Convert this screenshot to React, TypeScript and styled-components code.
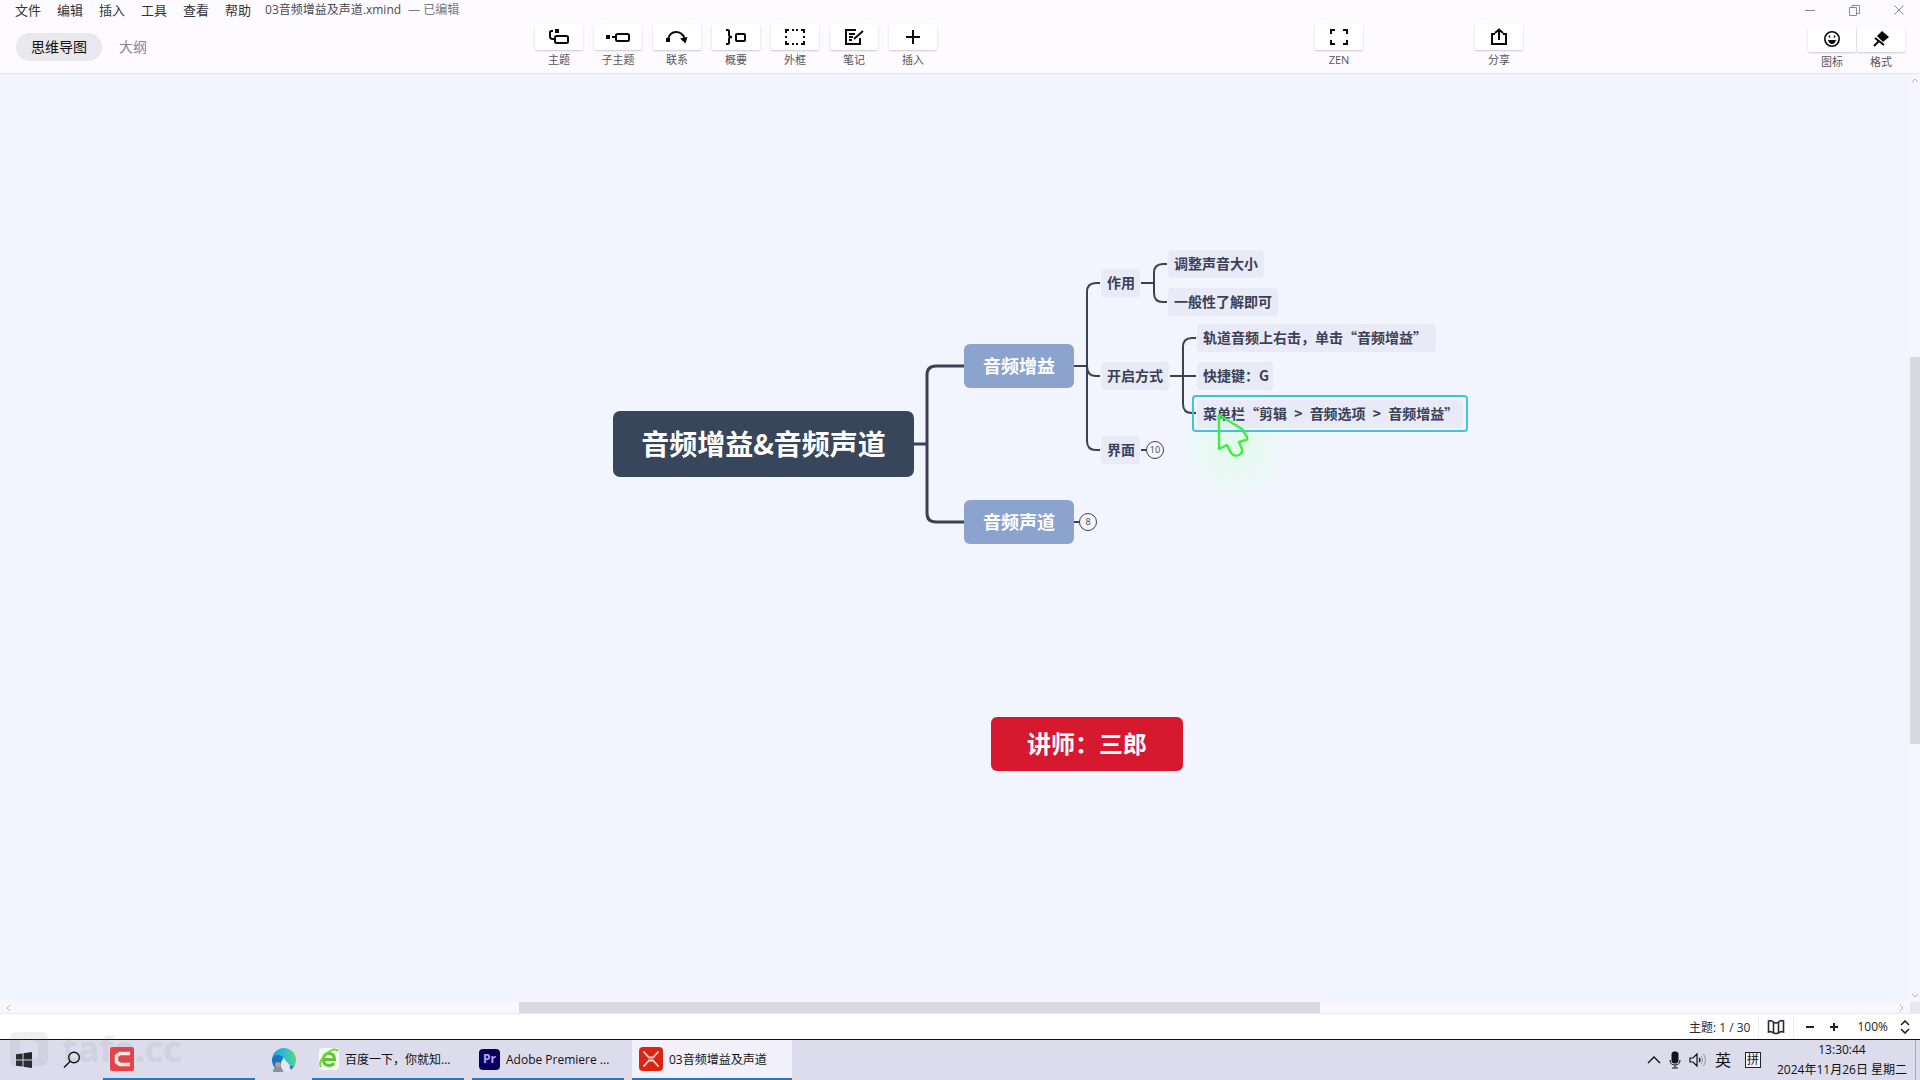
import React from "react";
import styled, { createGlobalStyle, css } from "styled-components";

const uiFont = `"Open Sans", "Noto Sans CJK SC", sans-serif`;
const mapFont = `"Noto Sans CJK SC", "Noto Sans", sans-serif`;
const ink = "#3b4055";

const GlobalStyle = createGlobalStyle`
  *, *::before, *::after { box-sizing: border-box; }
  body { margin: 0; font-family: ${uiFont}; font-size: 12px; color: #222; }
  button { margin: 0; padding: 0; border: 0; background: none; font: inherit; color: inherit; }
  svg { display: block; flex: none; }
`;

const Screen = styled.div`
  position: relative;
  display: flex;
  flex-direction: column;
  height: 100vh;
  overflow: hidden;
  background: #fdfbff;
`;

/* ---------- header ---------- */

const Header = styled.header`
  flex: none;
  display: flex;
  flex-direction: column;
  background: #fdfbff;
  border-bottom: 1px solid #e3e1ec;
`;

const MenuRow = styled.div`
  display: flex;
  align-items: center;
  height: 20px;
  padding: 0 16px 0 15px;
`;

const Menu = styled.nav`
  display: flex;
  gap: 16px;
`;

const MenuButton = styled.button`
  font-size: 13px;
  line-height: 20px;
  color: #333338;
`;

const FileTitle = styled.h1`
  margin: 0 0 0 14px;
  font-size: 12px;
  font-weight: 400;
  line-height: 20px;
  color: #4a4a52;
`;

const EditedMark = styled.span`
  margin-left: 7px;
  color: #77777f;
`;

const WindowControls = styled.div`
  display: flex;
  align-items: center;
  gap: 34px;
  margin-left: auto;
  color: #8a8890;
`;

const ToolRow = styled.div`
  display: flex;
  align-items: flex-start;
  height: 53px;
  padding: 4px 15px 0 16px;
`;

const Tabs = styled.div`
  display: flex;
  gap: 2px;
  margin-top: 9px;
`;

const Tab = styled.button<{ $active?: boolean }>`
  height: 28px;
  padding: 0 15px;
  border-radius: 14px;
  font-size: 14px;
  line-height: 28px;
  color: ${(p) => (p.$active ? "#111" : "#8a8890")};
  background: ${(p) => (p.$active ? "#e9e8ec" : "transparent")};
`;

const Spacer = styled.div<{ $grow: number }>`
  flex: ${(p) => p.$grow} 1 0;
`;

const ToolGroup = styled.div<{ $gap?: number }>`
  display: flex;
  gap: ${(p) => p.$gap ?? 0}px;
`;

const PanelToggles = styled(ToolGroup)`
  padding-top: 2px;
`;

const ToolButton = styled.button`
  display: flex;
  flex-direction: column;
  align-items: center;
  min-width: 48px;
  color: #55555c;
  font-size: 11px;
  line-height: 20px;
`;

const ToolFace = styled.span`
  display: flex;
  align-items: center;
  justify-content: center;
  align-self: stretch;
  height: 26px;
  color: #0a0a0a;
  background: #fff;
  border-radius: 2px;
  box-shadow: 0 1px 2px rgba(60, 50, 80, 0.26);
`;

/* ---------- canvas ---------- */

const Workspace = styled.main`
  flex: 1;
  min-height: 0;
  display: grid;
  grid-template-columns: 1fr 10px;
  grid-template-rows: 1fr 11px;
  background: #f2f5fe;
`;

const Canvas = styled.section`
  position: relative;
  overflow: hidden;
  font-family: ${mapFont};
`;

const Wires = styled.svg`
  position: absolute;
  left: 0;
  top: 0;
  overflow: visible;
`;

const tones = {
  root: css`
    background: #38465b;
    color: #fff;
    font-size: 28px;
    border-radius: 7px;
  `,
  branch: css`
    background: #8ba3cd;
    color: #fff;
    font-size: 18px;
    border-radius: 6px;
  `,
  floating: css`
    background: #d71930;
    color: #fff;
    font-size: 24px;
    border-radius: 6px;
  `,
  leaf: css`
    background: #e8ebf7;
    color: ${ink};
    font-size: 14px;
    border-radius: 4px;
    justify-content: flex-start;
    padding-left: 6px;
  `,
};

const Topic = styled.div<{ $tone: keyof typeof tones; $x: number; $y: number; $w: number; $h: number }>`
  position: absolute;
  left: ${(p) => p.$x}px;
  top: ${(p) => p.$y}px;
  width: ${(p) => p.$w}px;
  height: ${(p) => p.$h}px;
  display: flex;
  align-items: center;
  justify-content: center;
  padding-bottom: 2px;
  font-weight: 700;
  line-height: 1;
  white-space: nowrap;
  ${(p) => tones[p.$tone]}
`;

const Crumb = styled.span`
  padding: 0 4px;
`;

const Selection = styled.div<{ $x: number; $y: number; $w: number; $h: number }>`
  position: absolute;
  left: ${(p) => p.$x}px;
  top: ${(p) => p.$y}px;
  width: ${(p) => p.$w}px;
  height: ${(p) => p.$h}px;
  border: 2px solid #44bfe8;
  border-radius: 4px;
`;

const FoldBadge = styled.button<{ $x: number; $y: number }>`
  position: absolute;
  left: ${(p) => p.$x}px;
  top: ${(p) => p.$y}px;
  width: 18px;
  height: 18px;
  border: 1px solid ${ink};
  border-radius: 50%;
  background: #f5f6fe;
  color: ${ink};
  font-family: ${uiFont};
  font-size: 9px;
  line-height: 16px;
  text-align: center;
`;

const Glow = styled.div`
  position: absolute;
  left: 1176px;
  top: 312px;
  width: 120px;
  height: 120px;
  border-radius: 50%;
  background: radial-gradient(circle, rgba(210, 255, 215, 0.5), rgba(228, 255, 235, 0.35) 45%, rgba(242, 245, 254, 0) 70%);
`;

const Pointer = styled.svg`
  position: absolute;
  left: 1214px;
  top: 337px;
`;

const VScroll = styled.div`
  display: flex;
  flex-direction: column;
  align-items: center;
  padding: 2px 0;
  background: #f6f4fc;
  color: #b5b3bd;
`;

const VThumb = styled.div`
  width: 100%;
  flex: 386 1 0;
  background: #dad9df;
`;

const HScroll = styled.div`
  display: flex;
  align-items: center;
  padding: 0 4px;
  background: #f8f7fe;
  color: #b5b3bd;
`;

const HThumb = styled.div`
  align-self: stretch;
  flex: 801 1 0;
  background: #dbd9df;
`;

const Corner = styled.div`
  background: #e9e7ee;
`;

/* ---------- status bar ---------- */

const StatusBar = styled.footer`
  flex: none;
  display: flex;
  align-items: center;
  justify-content: flex-end;
  height: 27px;
  padding: 0 10px 0 0;
  background: #fff;
  border-top: 1px solid #eae8f0;
  border-bottom: 1px solid #111;
  font-size: 12px;
  color: #2b2b30;
`;

const StatusCell = styled.div`
  display: flex;
  align-items: center;
  height: 24px;
  padding: 0 8px;
  border-right: 1px solid #f0eef3;
`;

const ZoomControls = styled.div`
  display: flex;
  align-items: center;
  gap: 12px;
  padding-left: 10px;
  color: #222;
`;

const ZoomLevel = styled.button`
  display: flex;
  align-items: center;
  gap: 12px;
  margin-left: 5px;
`;

/* ---------- taskbar ---------- */

const Taskbar = styled.footer`
  flex: none;
  display: flex;
  height: 40px;
  padding-right: 4px;
  background: #dcdcec;
  color: #111;
`;

const IconSlot = styled.button<{ $w: number }>`
  display: flex;
  align-items: center;
  justify-content: center;
  width: ${(p) => p.$w}px;
  height: 40px;
`;

const TaskGap = styled.div`
  width: 7px;
`;

const TaskButton = styled.button<{ $w: number; $active?: boolean }>`
  display: flex;
  align-items: center;
  gap: 6px;
  width: ${(p) => p.$w}px;
  height: 40px;
  margin-right: ${(p) => (p.$active ? 0 : 8)}px;
  padding: 0 6px 0 7px;
  border-bottom: 2px solid #1c7cc9;
  background: ${(p) => (p.$active ? "#f2f0fb" : "transparent")};
  font-size: 12px;
  white-space: nowrap;
`;

const Tray = styled.div`
  display: flex;
  align-items: center;
  gap: 8px;
  margin-left: auto;
`;

const InputLanguage = styled.button`
  font-size: 16px;
  line-height: 20px;
`;

const InputMethod = styled.button`
  width: 16px;
  height: 16px;
  margin: 0 8px 0 6px;
  border: 1px solid #222;
  background: #f4f3fb;
  font-size: 12px;
  line-height: 14px;
`;

const Clock = styled.time`
  display: flex;
  flex-direction: column;
  align-items: center;
  padding-right: 8px;
  border-right: 1px solid #aaaabc;
  height: 40px;
  font-size: 12px;
  line-height: 20px;
  white-space: nowrap;
`;

const Watermark = styled.div`
  position: absolute;
  left: 10px;
  bottom: 12px;
  display: flex;
  align-items: center;
  gap: 14px;
  color: #777;
  opacity: 0.1;
  font-size: 36px;
  font-weight: 700;
  line-height: 38px;
  pointer-events: none;
`;

/* ---------- icons ---------- */

const Icon = ({ w = 22, h = 18, children, sw = 2 }: { w?: number; h?: number; sw?: number; children: React.ReactNode }) => (
  <svg width={w} height={h} viewBox={`0 0 ${w} ${h}`} fill="none" stroke="currentColor" strokeWidth={sw} aria-hidden="true">
    {children}
  </svg>
);

const TopicIcon = () => (
  <Icon>
    <path d="M5 3H3.500Q2 3 2 4.500V8.500Q2 11 5 11H6" />
    <rect x="7" y="8" width="13" height="7" rx="1.500" />
    <rect x="7" y="1" width="4" height="4" fill="currentColor" stroke="none" />
  </Icon>
);
const SubtopicIcon = () => (
  <Icon w={24}>
    <rect x="0" y="7" width="4" height="4" fill="currentColor" stroke="none" />
    <path d="M6 9H10" />
    <rect x="10" y="6" width="13" height="7" rx="1.500" />
  </Icon>
);
const RelationIcon = () => (
  <Icon>
    <rect x="0" y="10" width="4" height="4" fill="currentColor" stroke="none" />
    <path d="M2 11Q4 4 10 4Q16 4 18.500 10" />
    <path d="M14 10.500L21.500 9L19.500 15.500Z" fill="currentColor" stroke="none" />
  </Icon>
);
const SummaryIcon = () => (
  <Icon>
    <path d="M1 2H2.500Q4 2 4 3.500V7Q4 9 7 9Q4 9 4 11V14.500Q4 16 2.500 16H1" />
    <rect x="11" y="6" width="9" height="7" rx="1" />
  </Icon>
);
const BoundaryIcon = () => (
  <Icon>
    <path d="M2 5V2H5M8 2H10M12 2H14M17 2H20V5M20 8V10M20 13V16H17M14 16H12M10 16H8M5 16H2V13M2 10V8" />
  </Icon>
);
const NoteIcon = () => (
  <Icon>
    <path d="M13 2H3V16H17V10M6 6H12M6 9H10M6 12H9M11 11L20 3" />
  </Icon>
);
const PlusIcon = () => (
  <Icon>
    <path d="M11 2V16M4 9H18" />
  </Icon>
);
const ZenIcon = () => (
  <Icon>
    <path d="M3 6V2H7M15 2H19V6M19 12V16H15M7 16H3V12" />
  </Icon>
);
const ShareIcon = () => (
  <Icon>
    <path d="M7 6H4V16H18V6H15M11 12V2M7 5L11 1.500L15 5" />
  </Icon>
);
const SmileIcon = () => (
  <Icon>
    <circle cx="11" cy="9" r="7.200" strokeWidth="1.600" />
    <path d="M7 10H15Q14 14 11 14Q8 14 7 10Z" fill="currentColor" stroke="none" />
    <path d="M8.500 5.500V7.500M13.500 5.500V7.500" strokeWidth="1.600" />
  </Icon>
);
const BrushIcon = () => (
  <Icon>
    <path d="M12 1L19 7L13 12L7 6Z" fill="currentColor" stroke="none" />
    <path d="M5 8L14 15M9 11L4 16" />
  </Icon>
);

const StartIcon = () => (
  <svg width="16" height="16" viewBox="0 0 16 16" fill="#25252b" aria-hidden="true">
    <path d="M0 2.300L6.500 1.400V7.500H0ZM7.500 1.300L16 0V7.500H7.500ZM0 8.500H6.500V14.600L0 13.700ZM7.500 8.500H16V16L7.500 14.800Z" />
  </svg>
);
const SearchIcon = () => (
  <Icon w={18} h={18} sw={1.4}>
    <circle cx="11" cy="6.500" r="5.300" />
    <path d="M7.300 10.300L1 16.500" />
  </Icon>
);
const RecorderIcon = () => (
  <svg width="24" height="24" viewBox="0 0 24 24" aria-hidden="true">
    <rect width="24" height="24" rx="2" fill="#e8414a" />
    <path d="M20 6.500H10L6.500 9V15L10 17.500H20" fill="none" stroke="#fff0e6" strokeWidth="3.500" />
  </svg>
);
const EdgeIcon = () => (
  <svg width="24" height="24" viewBox="0 0 24 24" aria-hidden="true">
    <defs>
      <linearGradient id="edge" x1="0" y1="0.300" x2="1" y2="0.200">
        <stop offset="0" stopColor="#1f9fe0" />
        <stop offset="0.600" stopColor="#35c1c9" />
        <stop offset="1" stopColor="#5fd96b" />
      </linearGradient>
    </defs>
    <circle cx="12" cy="12" r="12" fill="url(#edge)" />
    <path d="M1 9Q6 5 11 9Q9 12 11 15Q15 19 22 18Q18 24 12 24Q1 23 0 12Z" fill="#1b74bf" />
    <path d="M9 14L12 10L14 13L17 16L19 23Q14 25 9 23Z" fill="#e3e8f2" />
    <circle cx="6" cy="17" r="3" fill="#b79c95" />
    <path d="M1 24Q1 19 6 19Q11 19 11 24Z" fill="#8f8f9c" />
  </svg>
);
const BrowserIcon = () => (
  <svg width="20" height="22" viewBox="0 0 20 22" aria-hidden="true">
    <rect width="20" height="22" rx="4" fill="#f4fbf0" />
    <path d="M4 11.500H15.500Q15.500 5.500 10 5.500Q4.500 5.500 4.500 11.500Q4.500 17.500 10 17.500Q13.500 17.500 15 15" fill="none" stroke="#5cc534" strokeWidth="3" />
    <path d="M2 19Q-1 14 7 6Q15 -1 19 3" fill="none" stroke="#7ad23f" strokeWidth="2" />
  </svg>
);
const PremiereBadge = styled.span`
  width: 21px;
  height: 21px;
  border-radius: 4px;
  background: #07005c;
  color: #b9a6ff;
  font-size: 12px;
  font-weight: 700;
  line-height: 20px;
  text-align: center;
`;
const XmindIcon = () => (
  <svg width="24" height="24" viewBox="0 0 24 24" aria-hidden="true">
    <rect width="24" height="24" rx="4" fill="#dd2414" />
    <path d="M4.500 4.500L10 10.500H14L19.500 4.500M4.500 19.500L10 13.500H14L19.500 19.500" fill="none" stroke="#ffd9cf" strokeWidth="1.800" />
  </svg>
);

/* ---------- data ---------- */

const menus = ["文件", "编辑", "插入", "工具", "查看", "帮助"];

const tools = [
  { label: "主题", icon: <TopicIcon /> },
  { label: "子主题", icon: <SubtopicIcon /> },
  { label: "联系", icon: <RelationIcon /> },
  { label: "概要", icon: <SummaryIcon /> },
  { label: "外框", icon: <BoundaryIcon /> },
  { label: "笔记", icon: <NoteIcon /> },
  { label: "插入", icon: <PlusIcon /> },
];

const leaves = [
  { text: "作用", x: 1101, y: 195, w: 39, h: 28 },
  { text: "开启方式", x: 1101, y: 288, w: 68, h: 28 },
  { text: "界面", x: 1101, y: 362, w: 39, h: 28 },
  { text: "调整声音大小", x: 1168, y: 176, w: 96, h: 28 },
  { text: "一般性了解即可", x: 1168, y: 214, w: 110, h: 28 },
  { text: "轨道音频上右击，单击“音频增益”", x: 1197, y: 250, w: 239, h: 28 },
  { text: "快捷键：G", x: 1197, y: 288, w: 76, h: 28 },
];

const Tool = ({ label, icon }: { label: string; icon: React.ReactNode }) => (
  <ToolButton type="button">
    <ToolFace>{icon}</ToolFace>
    {label}
  </ToolButton>
);

export default function App() {
  return (
    <Screen>
      <GlobalStyle />
      <Header>
        <MenuRow>
          <Menu>
            {menus.map((m) => (
              <MenuButton type="button" key={m}>{m}</MenuButton>
            ))}
          </Menu>
          <FileTitle>
            03音频增益及声道.xmind<EditedMark>— 已编辑</EditedMark>
          </FileTitle>
          <WindowControls>
            <button type="button" aria-label="最小化"><Icon w={10} h={12} sw={1}><path d="M0 6.500H10" /></Icon></button>
            <button type="button" aria-label="还原"><Icon w={11} h={12} sw={1}><path d="M0.500 3.500H7.500V11.500H0.500ZM3 3.500V1.500H10.500V9.500H7.500" /></Icon></button>
            <button type="button" aria-label="关闭"><Icon w={10} h={12} sw={1}><path d="M0.500 1.500L9.500 10.500M9.500 1.500L0.500 10.500" /></Icon></button>
          </WindowControls>
        </MenuRow>
        <ToolRow>
          <Tabs>
            <Tab type="button" $active>思维导图</Tab>
            <Tab type="button">大纲</Tab>
          </Tabs>
          <Spacer $grow={373} />
          <ToolGroup $gap={11}>
            {tools.map((t) => (
              <Tool key={t.label} {...t} />
            ))}
          </ToolGroup>
          <Spacer $grow={378} />
          <Tool label="ZEN" icon={<ZenIcon />} />
          <Spacer $grow={112} />
          <Tool label="分享" icon={<ShareIcon />} />
          <Spacer $grow={285} />
          <PanelToggles $gap={1}>
            <Tool label="图标" icon={<SmileIcon />} />
            <Tool label="格式" icon={<BrushIcon />} />
          </PanelToggles>
        </ToolRow>
      </Header>

      <Workspace>
        <Canvas>
          <Glow />
          <Topic $tone="root" $x={613} $y={337} $w={301} $h={66}>音频增益&amp;音频声道</Topic>
          <Topic $tone="branch" $x={964} $y={270} $w={110} $h={44}>音频增益</Topic>
          <Topic $tone="branch" $x={964} $y={426} $w={110} $h={44}>音频声道</Topic>
          <Topic $tone="floating" $x={991} $y={643} $w={192} $h={54}>讲师：三郎</Topic>
          {leaves.map((l) => (
            <Topic key={l.text} $tone="leaf" $x={l.x} $y={l.y} $w={l.w} $h={l.h}>{l.text}</Topic>
          ))}
          <Topic $tone="leaf" $x={1197} $y={326} $w={266} $h={28}>
            菜单栏“剪辑<Crumb>&nbsp;&gt;&nbsp;</Crumb>音频选项<Crumb>&nbsp;&gt;&nbsp;</Crumb>音频增益”
          </Topic>
          <Wires width="1" height="1" fill="none" stroke={ink} strokeWidth="2" aria-hidden="true">
            <g strokeWidth="3">
              <path d="M914 370H927M964 292H936Q927 292 927 301V439Q927 448 936 448H964" />
            </g>
            <path d="M1074 292H1087M1100 209H1096Q1087 209 1087 218V367Q1087 376 1096 376H1100M1087 292Q1087 302 1096 302H1100" />
            <path d="M1141 209H1154M1167 190H1163Q1154 190 1154 199V219Q1154 228 1163 228H1167" />
            <path d="M1170 302H1196M1196 264H1192Q1183 264 1183 273V330Q1183 339 1192 339H1196" />
            <path d="M1141 376H1147M1074 448H1080" />
          </Wires>
          <FoldBadge type="button" $x={1146} $y={367}>10</FoldBadge>
          <FoldBadge type="button" $x={1079} $y={439}>8</FoldBadge>
          <Selection $x={1192} $y={321} $w={276} $h={37} />
          <Pointer width="36" height="48" viewBox="0 0 36 48" fill="none" stroke="#3df03a" strokeWidth="2.400" strokeLinejoin="round" aria-hidden="true">
            <path d="M5 4L5 38L13 34L17 42Q20 46 25 44Q29 42 28 38L25 31L32 29Q34 28 33 26L28 18Z" />
          </Pointer>
        </Canvas>
        <VScroll>
          <Icon w={8} h={8} sw={1}><path d="M1 6L4 3L7 6" /></Icon>
          <Spacer $grow={273} />
          <VThumb />
          <Spacer $grow={248} />
          <Icon w={8} h={8} sw={1}><path d="M1 2L4 5L7 2" /></Icon>
        </VScroll>
        <HScroll>
          <Icon w={8} h={8} sw={1}><path d="M6 1L3 4L6 7" /></Icon>
          <Spacer $grow={507} />
          <HThumb />
          <Spacer $grow={578} />
          <Icon w={8} h={8} sw={1}><path d="M2 1L5 4L2 7" /></Icon>
        </HScroll>
        <Corner />
      </Workspace>

      <StatusBar>
        <StatusCell>主题: 1 / 30</StatusCell>
        <StatusCell>
          <Icon w={18} h={16} sw={1.6}>
            <path d="M1.500 2Q4 1 6.500 3Q9 5 11.500 3Q14 1 16.500 2V13Q14 12 11.500 14Q9 15 6.500 14Q4 12 1.500 13ZM6.500 3V14M11.500 3V14" />
          </Icon>
        </StatusCell>
        <ZoomControls>
          <button type="button" aria-label="缩小"><Icon w={12} h={12}><path d="M2 6H10" /></Icon></button>
          <button type="button" aria-label="放大"><Icon w={12} h={12}><path d="M2 6H10M6 2V10" /></Icon></button>
          <ZoomLevel type="button">
            100%
            <Icon w={10} h={14} sw={1.6}><path d="M1 5L5 1L9 5M1 9L5 13L9 9" /></Icon>
          </ZoomLevel>
        </ZoomControls>
      </StatusBar>

      <Taskbar>
        <IconSlot type="button" $w={48} aria-label="开始"><StartIcon /></IconSlot>
        <IconSlot type="button" $w={48} aria-label="搜索"><SearchIcon /></IconSlot>
        <TaskGap />
        <TaskButton type="button" $w={152} aria-label="录屏"><RecorderIcon /></TaskButton>
        <IconSlot type="button" $w={42} aria-label="Edge"><EdgeIcon /></IconSlot>
        <TaskGap />
        <TaskButton type="button" $w={152}><BrowserIcon />百度一下，你就知...</TaskButton>
        <TaskButton type="button" $w={152}><PremiereBadge>Pr</PremiereBadge>Adobe Premiere ...</TaskButton>
        <TaskButton type="button" $w={160} $active><XmindIcon />03音频增益及声道</TaskButton>
        <Tray>
          <Icon w={14} h={14} sw={1.4}><path d="M1 10L7 4L13 10" /></Icon>
          <svg width="12" height="18" viewBox="0 0 12 18" fill="#14141a" stroke="#14141a" aria-hidden="true">
            <rect x="3" y="1" width="6" height="11" rx="2" />
            <path d="M1 9Q1 14 6 14Q11 14 11 9M6 14V17M3 17H9" fill="none" />
          </svg>
          <Icon w={18} h={16} sw={1.2}>
            <path d="M1 6H4L8 2V14L4 10H1ZM10 6Q12 8 10 10" />
            <path d="M12 4Q15 8 12 12M14.500 2Q18.500 8 14.500 14" stroke="#a0a0b0" />
          </Icon>
          <InputLanguage type="button">英</InputLanguage>
          <InputMethod type="button">拼</InputMethod>
          <Clock>
            <span>13:30:44</span>
            <span>2024年11月26日 星期二</span>
          </Clock>
        </Tray>
      </Taskbar>

      <Watermark aria-hidden="true">
        <svg width="38" height="34" viewBox="0 0 38 34" fill="currentColor">
          <path fillRule="evenodd" d="M6 0H32Q38 0 38 6V28Q38 34 32 34H6Q0 34 0 28V6Q0 0 6 0ZM10 8V26H28V12L20 6Z" />
        </svg>
        tafe.cc
      </Watermark>
    </Screen>
  );
}
